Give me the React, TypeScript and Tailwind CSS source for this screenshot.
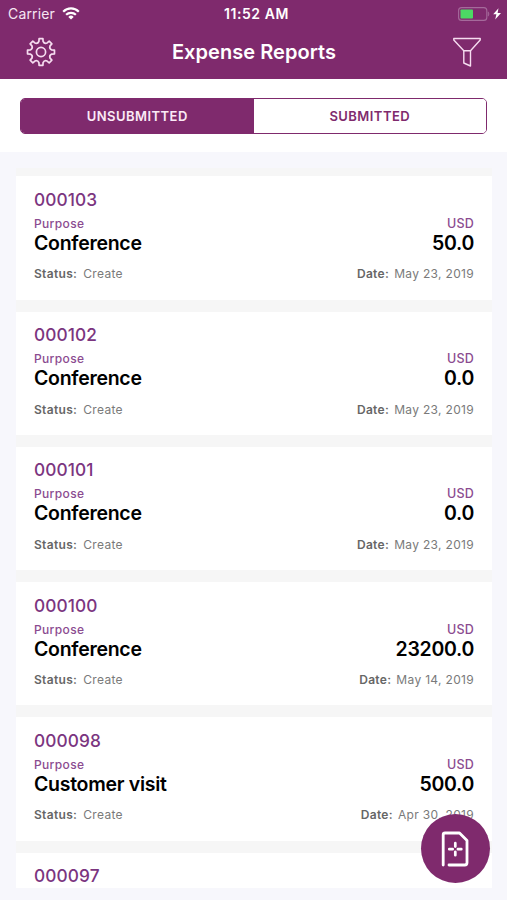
import React, { useState } from "react";

type Report = {
  id: string;
  purpose?: string;
  amount?: string;
  date?: string;
};

const reports: Report[] = [
  { id: "000103", purpose: "Conference", amount: "50.0", date: "May 23, 2019" },
  { id: "000102", purpose: "Conference", amount: "0.0", date: "May 23, 2019" },
  { id: "000101", purpose: "Conference", amount: "0.0", date: "May 23, 2019" },
  { id: "000100", purpose: "Conference", amount: "23200.0", date: "May 14, 2019" },
  { id: "000098", purpose: "Customer visit", amount: "500.0", date: "Apr 30, 2019" },
  { id: "000097" },
];

// Eight teeth, one every 45 degrees, joined by rounded valleys
const polar = (deg: number, r: number) => {
  const rad = ((deg - 90) * Math.PI) / 180;
  return `${(15 + r * Math.cos(rad)).toFixed(2)} ${(15 + r * Math.sin(rad)).toFixed(2)}`;
};
const gearPath =
  [0, 45, 90, 135, 180, 225, 270, 315]
    .map(
      (a, i) =>
        `${i === 0 ? "M" : "L"}${polar(a - 8, 13.6)}L${polar(a + 8, 13.6)}L${polar(a + 11, 10.9)}Q${polar(
          a + 22.5,
          8.6
        )} ${polar(a + 34, 10.9)}`
    )
    .join("") + "Z";

const GearIcon = () => (
  <svg className="w-[30px] h-[30px]" viewBox="0 0 30 30" fill="none" stroke="#f6dcf0" strokeWidth="1.7" strokeLinejoin="round">
    <path d={gearPath} />
    <circle cx="15" cy="15" r="4.6" />
  </svg>
);

const FilterIcon = () => (
  <svg className="w-[30px] h-[30px]" viewBox="0 0 30 30" fill="none" stroke="#f6dcf0" strokeWidth="1.4" strokeLinejoin="round">
    <path d="M1.8 1.5H28.2V3L18.5 13.7H11.8L1.8 3Z" />
    <path d="M11.8 13.7V26L18.5 29V13.7" />
  </svg>
);

const WifiIcon = () => (
  <svg className="w-[18px] h-[13px]" viewBox="0 0 18 13" fill="none" stroke="white" strokeWidth="2.2">
    <path d="M1.2 4.7A11 11 0 0 1 16.8 4.7" />
    <path d="M4.1 7.8A7 7 0 0 1 13.9 7.8" />
    <path d="M9 12.6L6.3 9.9A3.8 3.8 0 0 1 11.7 9.9Z" fill="white" stroke="none" />
  </svg>
);

const BatteryIcon = () => (
  <svg className="w-[44px] h-[14px]" viewBox="0 0 44 14">
    <rect x="0.6" y="0.6" width="28.2" height="12.8" rx="3" fill="none" stroke="#a56a9b" strokeWidth="1.1" />
    <rect x="2.5" y="2.4" width="12.5" height="9.2" rx="0.8" fill="#4cd964" />
    <path d="M30.2 4.8Q31.8 7 30.2 9.2Z" fill="#a56a9b" stroke="#a56a9b" strokeWidth="0.6" />
    <path d="M40.5 1.2L35.2 7.2H38.4L37.2 12.6L43 6H39.6Z" fill="white" />
  </svg>
);

const AddReportIcon = () => (
  <svg className="w-[28px] h-[36px]" viewBox="0 0 28 36" fill="none" stroke="white" strokeWidth="2.8" strokeLinecap="round" strokeLinejoin="round">
    <path d="M2.2 34V3.8Q2.2 2 4 2H18.5L26 9.5V31.8Q26 34 23.8 34H8" />
    <path strokeWidth="2.7" d="M14.3 12.2V15.6M14.3 20.8V24.2M8.3 18.2H11.7M16.9 18.2H20.3" />
  </svg>
);

const ReportCard = ({ report }: { report: Report }) => (
  <li className="flex-none h-[123.25px] px-[18px] bg-white">
    <p className="pt-[12.4px] text-[17.3px] leading-[22px] font-medium tracking-[0.1px] text-[#7b357f]">{report.id}</p>
    {report.purpose && (
      <>
        <div className="mt-[5px] flex justify-between text-[12px] leading-[16px] font-medium text-[#8b4b90]">
          <span className="tracking-[0.35px]">Purpose</span>
          <span className="text-[12.5px] tracking-[0.2px]">USD</span>
        </div>
        <div className="flex justify-between text-[19.5px] leading-[22px] font-semibold tracking-[-0.28px] text-black">
          <span>{report.purpose}</span>
          <span>{report.amount}</span>
        </div>
        <div className="mt-[12.6px] flex justify-between text-[12px] leading-[16px] tracking-[0.32px] text-[#7a7a7a]">
          <p>
            <span className="mr-[6px] font-semibold text-[#666666]">Status:</span>
            Create
          </p>
          <p>
            <span className="mr-[5px] font-semibold text-[#666666]">Date:</span>
            {report.date}
          </p>
        </div>
      </>
    )}
  </li>
);

export default function App() {
  const [tab, setTab] = useState<"unsubmitted" | "submitted">("unsubmitted");

  const tabClass = (active: boolean) =>
    `flex-1 pt-px text-[13px] font-semibold tracking-[0.45px] ${active ? "bg-[#7f2a6d] text-[#fbeaf7]" : "bg-white text-[#7f2a6d]"}`;

  return (
    <div className="relative w-full h-[900px] flex flex-col overflow-hidden bg-[#f7f7fc] font-['Inter',sans-serif]">
      {/* Status bar + title */}
      <header className="flex-none h-[79px] bg-[#7f2a6d] text-white">
        <div className="h-[27px] pl-[8px] pr-[5px] grid grid-cols-3 items-center">
          <div className="flex items-center gap-[7px] text-[14px] tracking-[0.15px] text-[#f6e6f3]">
            Carrier
            <WifiIcon />
          </div>
          <p className="pl-[3px] text-center text-[14px] font-semibold tracking-[0.55px]">11:52 AM</p>
          <div className="flex justify-end">
            <BatteryIcon />
          </div>
        </div>
        <div className="h-[50px] pl-[26px] pr-[25px] flex items-center justify-between">
          <button aria-label="Settings">
            <GearIcon />
          </button>
          <h1 className="text-[20px] font-semibold tracking-[0.05px]">Expense Reports</h1>
          <button aria-label="Filter">
            <FilterIcon />
          </button>
        </div>
      </header>

      {/* Tabs */}
      <div className="flex-none h-[73px] px-[20px] pt-[19px] bg-white">
        <div className="h-[36px] flex overflow-hidden rounded-[5px] border border-[#7f2a6d]">
          <button className={tabClass(tab === "unsubmitted")} onClick={() => setTab("unsubmitted")}>
            UNSUBMITTED
          </button>
          <button className={tabClass(tab === "submitted")} onClick={() => setTab("submitted")}>
            SUBMITTED
          </button>
        </div>
      </div>

      {/* Report list */}
      <ul className="mt-[16px] ml-[16px] mr-[15px] h-[720px] pt-[8.4px] flex flex-col gap-[12px] overflow-hidden bg-[#f6f6f6]">
        {reports.map((report) => (
          <ReportCard key={report.id} report={report} />
        ))}
      </ul>

      <button
        aria-label="New report"
        className="absolute left-[421px] top-[814px] w-[69px] h-[69px] pr-[2px] flex items-center justify-center rounded-full bg-[#7f2a6d]"
      >
        <AddReportIcon />
      </button>
    </div>
  );
}
